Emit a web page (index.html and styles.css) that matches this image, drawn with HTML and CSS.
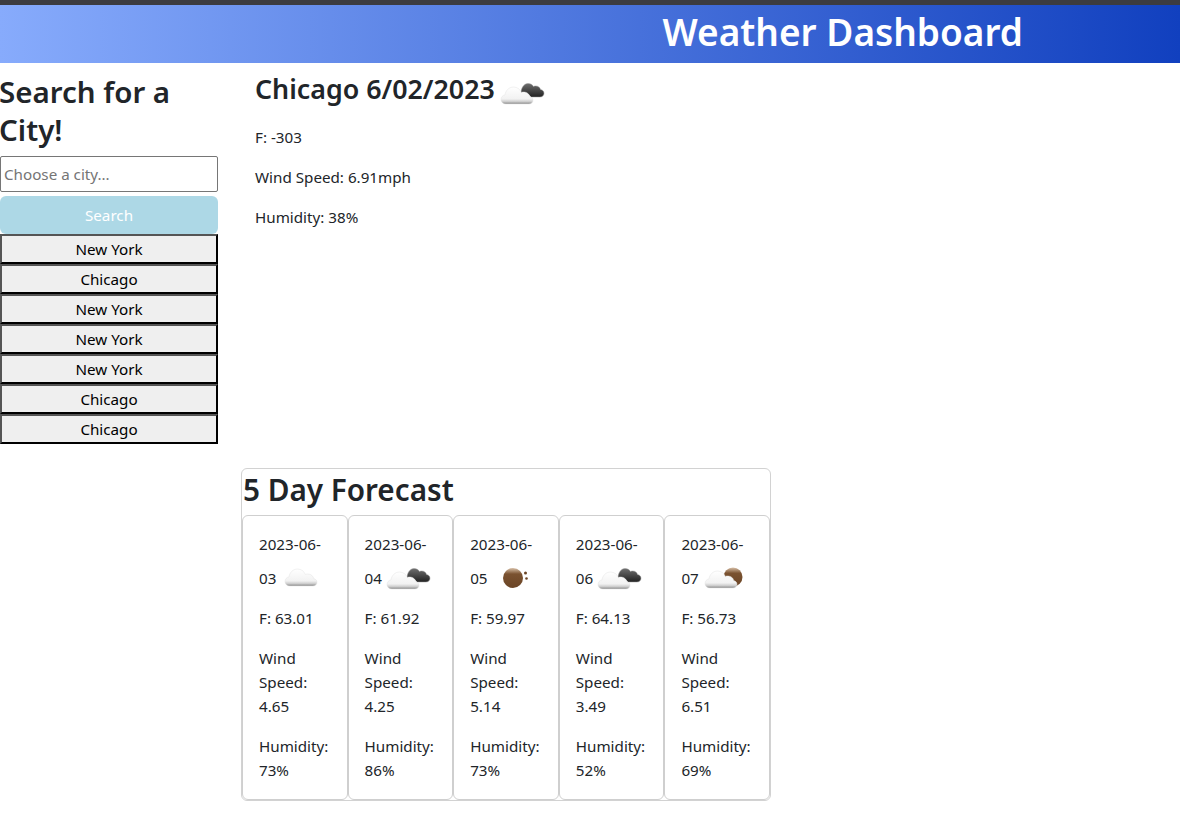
FILE: index.html

```html
<!DOCTYPE html>
<html lang="en">
<head>
  <meta charset="UTF-8">
  <title>Weather Dashboard</title>
  <link rel="stylesheet" href="styles.css">
</head>
<body>
  <svg class="defs" width="0" height="0">
    <defs>
      <linearGradient id="cloudFill" x1="0" y1="0" x2="0" y2="1">
        <stop offset="0" stop-color="#ffffff"/>
        <stop offset="0.7" stop-color="#f2f2f2"/>
        <stop offset="0.85" stop-color="#d0d0d0"/>
        <stop offset="1" stop-color="#8a8a8a"/>
      </linearGradient>
      <linearGradient id="darkFill" x1="0" y1="0" x2="0" y2="1">
        <stop offset="0" stop-color="#6e6e6e"/>
        <stop offset="1" stop-color="#222222"/>
      </linearGradient>
      <linearGradient id="moonFill" x1="0" y1="0" x2="0" y2="1">
        <stop offset="0" stop-color="#d8c0a8"/>
        <stop offset="0.3" stop-color="#7a5230"/>
        <stop offset="1" stop-color="#6b4526"/>
      </linearGradient>
      <path id="cloud" d="M6 27c-3 0-5-2-5-4.600 0-2.400 1.800-4.200 4-4.500C5.600 13.600 9 10 13.500 10c3.600 0 6.600 2.200 7.800 5.400.8-.3 1.600-.4 2.400-.4 3.400 0 5.600 2.200 6 4.600 1.800.4 3.300 1.800 3.300 3.600 0 2.400-2 3.800-4 3.800z" fill="url(#cloudFill)" stroke="#e2e2e2" stroke-width=".5"/>
      <path id="darkCloud" d="M21 16c0-5 3-9.500 7-9.500 2.500 0 4.500 1.200 5.500 3 .8-.4 1.500-.5 2.300-.5 2.400 0 4.200 1.400 4.700 3.500 2 .2 3.500 1.800 3.500 3.700 0 2-1.600 3.800-4 3.800h-9c-1.500-2.500-5-4-10-4z" fill="url(#darkFill)" stroke="#9a9a9a" stroke-width=".5"/>
      <symbol id="icon-clouds" viewBox="0 -6 46 34"><use href="#cloud" x="4" y="-3"/></symbol>
      <symbol id="icon-broken" viewBox="0 -6 46 34"><use href="#darkCloud"/><use href="#cloud"/></symbol>
      <symbol id="icon-moon" viewBox="0 -6 46 34">
        <circle cx="21" cy="16" r="10" fill="url(#moonFill)"/>
        <circle cx="33.500" cy="11" r="1.500" fill="#6b4526"/>
        <circle cx="34.500" cy="16.500" r="1.300" fill="#6b4526"/>
      </symbol>
      <symbol id="icon-few" viewBox="0 -6 46 34">
        <circle cx="30" cy="15" r="9.500" fill="url(#moonFill)"/>
        <use href="#cloud" x="1" y="-1"/>
      </symbol>
    </defs>
  </svg>

  <div class="top-strip"></div>
  <header class="banner">
    <h1>Weather Dashboard</h1>
  </header>

  <div class="page">
    <aside class="sidebar">
      <h2>Search for a City!</h2>
      <input class="city-input" type="text" placeholder="Choose a city...">
      <button class="search-btn">Search</button>
      <button class="city-btn">New York</button>
      <button class="city-btn">Chicago</button>
      <button class="city-btn">New York</button>
      <button class="city-btn">New York</button>
      <button class="city-btn">New York</button>
      <button class="city-btn">Chicago</button>
      <button class="city-btn">Chicago</button>
    </aside>

    <main class="content">
      <section class="current">
        <h3>Chicago 6/02/2023 <svg class="icon"><use href="#icon-broken"/></svg></h3>
        <p>F: -303</p>
        <p>Wind Speed: 6.91mph</p>
        <p>Humidity: 38%</p>
      </section>

      <section class="forecast">
        <h2>5 Day Forecast</h2>
        <div class="cards">
          <div class="card">
            <p>2023-06-03 <svg class="icon"><use href="#icon-clouds"/></svg></p>
            <p>F: 63.01</p>
            <p>Wind Speed: 4.65</p>
            <p>Humidity: 73%</p>
          </div>
          <div class="card">
            <p>2023-06-04 <svg class="icon"><use href="#icon-broken"/></svg></p>
            <p>F: 61.92</p>
            <p>Wind Speed: 4.25</p>
            <p>Humidity: 86%</p>
          </div>
          <div class="card">
            <p>2023-06-05 <svg class="icon"><use href="#icon-moon"/></svg></p>
            <p>F: 59.97</p>
            <p>Wind Speed: 5.14</p>
            <p>Humidity: 73%</p>
          </div>
          <div class="card">
            <p>2023-06-06 <svg class="icon"><use href="#icon-broken"/></svg></p>
            <p>F: 64.13</p>
            <p>Wind Speed: 3.49</p>
            <p>Humidity: 52%</p>
          </div>
          <div class="card">
            <p>2023-06-07 <svg class="icon"><use href="#icon-few"/></svg></p>
            <p>F: 56.73</p>
            <p>Wind Speed: 6.51</p>
            <p>Humidity: 69%</p>
          </div>
        </div>
      </section>
    </main>
  </div>
</body>
</html>
```

FILE: styles.css

```css
body {
  margin: 0;
  font-family: "Noto Sans", "Open Sans", sans-serif;
  font-size: 15.2px;
  line-height: 24px;
  color: #212529;
  background: #fff;
}
.defs {
  display: block;
  height: 0;
}
.top-strip {
  height: 5px;
  background: #3c3c40;
}
.banner {
  height: 58px;
  box-sizing: border-box;
  display: flex;
  align-items: center;
  justify-content: flex-end;
  padding: 0 157px 4px 0;
  background: linear-gradient(to right, #87abfc, #1140bf);
}
.banner h1 {
  margin: 0;
  font-size: 37px;
  font-weight: 600;
  line-height: 54px;
  color: #fff;
}
.page {
  display: flex;
}
.sidebar {
  width: 218px;
  flex: none;
  display: flex;
  flex-direction: column;
  padding-top: 10px;
}
.sidebar h2 {
  margin: 0 0 7px -1px;
  font-size: 29.500px;
  font-weight: 560;
  line-height: 38px;
}
.city-input {
  height: 36px;
  box-sizing: border-box;
  margin: 0 0 4px;
  padding: 0 3px;
  border: 1px solid #767676;
  border-radius: 2px;
  font: inherit;
}
.city-input::placeholder {
  color: #757575;
}
.search-btn {
  height: 38px;
  border: none;
  border-radius: 6px;
  background: lightblue;
  color: #fff;
  font: inherit;
}
.city-btn {
  height: 30px;
  padding: 0;
  border: 2px solid #000;
  border-top-color: #555;
  border-left-color: #555;
  background: #efefef;
  color: #000;
  font: inherit;
}
.content {
  flex: none;
  width: 530px;
  margin-left: 23px;
}
.current {
  height: 405px;
  box-sizing: border-box;
  padding: 8px 0 0 14px;
}
.current h3 {
  margin: 0 0 18px;
  font-size: 26.800px;
  font-weight: 560;
  line-height: 36px;
}
.current h3 .icon {
  margin-left: -2px;
}
.current p {
  margin: 0 0 16px;
}
.forecast {
  border: 1px solid #d2d2d2;
  border-radius: 6px;
}
.forecast h2 {
  margin: 0 0 4px;
  padding-left: 1px;
  font-size: 29.700px;
  font-weight: 560;
  line-height: 42px;
}
.cards {
  display: flex;
}
.card {
  flex: 1 1 0;
  min-width: 0;
  box-sizing: border-box;
  height: 285px;
  padding: 16px;
  border: 1px solid #cfcfcf;
  border-radius: 6px;
}
.card p {
  margin: 0 0 16px;
}
.icon {
  width: 46px;
  height: 34px;
  vertical-align: -6px;
}
```
